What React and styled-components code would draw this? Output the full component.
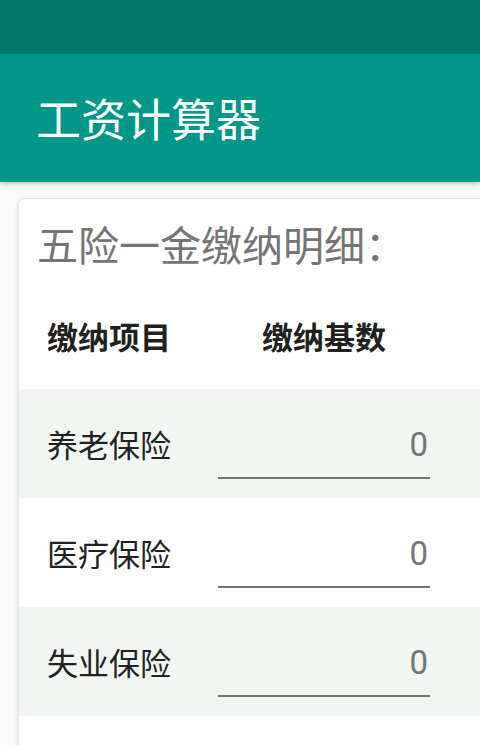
import React from 'react';
import styled, {createGlobalStyle} from 'styled-components';

const GlobalStyle = createGlobalStyle`
    html, body {
        margin: 0;
        padding: 0;
        background: #fafafa;
        overflow: hidden;
    }
    body {
        font-family: "Noto Sans CJK SC", "Noto Sans", sans-serif;
    }
`;

const Screen = styled.div`
    width: 480px;
    height: 745px;
    overflow: hidden;
    background: #fafafa;
`;

const StatusBar = styled.div`
    height: 54px;
    background: #00796b;
`;

const AppBar = styled.header`
    position: relative;
    z-index: 1;
    height: 128px;
    display: flex;
    align-items: center;
    padding-left: 36px;
    background: #009688;
    box-shadow: 0 2px 5px rgba(0, 0, 0, 0.22);
`;

const Title = styled.h1`
    margin: 0 0 2px;
    font-size: 45px;
    font-weight: 400;
    color: #fff;
`;

const Content = styled.main`
    padding: 16px 0 0 18px;
`;

const Card = styled.section`
    width: 600px;
    min-height: 600px;
    background: #fff;
    border: 1px solid #e4e4e4;
    border-radius: 6px;
    box-shadow: 0 1px 4px rgba(0, 0, 0, 0.14);
`;

const CardTitle = styled.h2`
    margin: 0;
    padding: 19px 0 0 18px;
    font-size: 41px;
    line-height: 50px;
    font-weight: 400;
    color: #757575;
`;

const Grid = styled.div`
    display: grid;
    grid-template-columns: 171px 212px 1fr;
    padding-left: 28px;
    align-items: center;
    height: 109px;
    background: ${p => p.shaded ? '#f1f6f3' : 'transparent'};
`;

const HeaderRow = styled(Grid)`
    align-items: start;
    height: auto;
    padding-top: 48px;
    padding-bottom: 33px;
`;

const HeadCell = styled.div`
    font-size: 31px;
    line-height: 40px;
    font-weight: 700;
    color: #212121;
    text-align: ${p => p.center ? 'center' : 'left'};
`;

const Label = styled.div`
    font-size: 31px;
    line-height: 40px;
    color: #212121;
`;

const Amount = styled.input`
    align-self: end;
    box-sizing: border-box;
    width: 212px;
    height: 55px;
    margin: 0 0 19px;
    padding: 0 2px 13px;
    border: none;
    border-bottom: 2px solid #707572;
    background: transparent;
    font-family: Roboto, "Noto Sans", sans-serif;
    font-size: 33px;
    line-height: 40px;
    color: #757575;
    text-align: right;
    outline: none;
`;

const items = ['养老保险', '医疗保险', '失业保险'];

export default function App() {
    return (
        <Screen>
            <GlobalStyle/>
            <StatusBar/>
            <AppBar>
                <Title>工资计算器</Title>
            </AppBar>
            <Content>
                <Card>
                    <CardTitle>五险一金缴纳明细：</CardTitle>
                    <HeaderRow>
                        <HeadCell>缴纳项目</HeadCell>
                        <HeadCell center>缴纳基数</HeadCell>
                    </HeaderRow>
                    {items.map((name, i) => (
                        <Grid key={name} shaded={i % 2 === 0}>
                            <Label>{name}</Label>
                            <Amount type="text" defaultValue="0"/>
                        </Grid>
                    ))}
                </Card>
            </Content>
        </Screen>
    );
}
